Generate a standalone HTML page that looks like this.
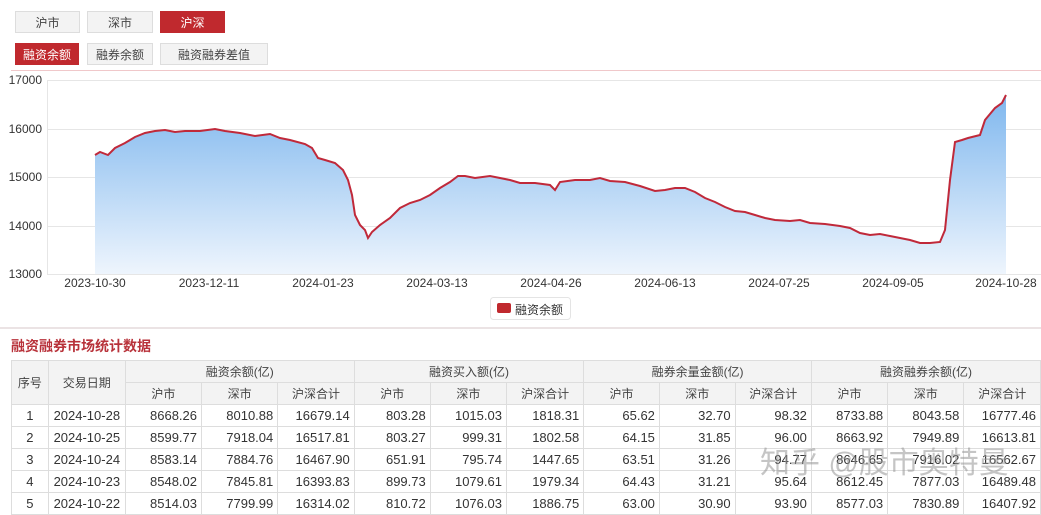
<!DOCTYPE html>
<html><head><meta charset="utf-8"><style>
body{margin:0;width:1041px;height:500px;overflow:hidden;background:#fff;font-family:"Liberation Sans","Noto Sans CJK SC",sans-serif;color:#333;position:relative}
.b{position:absolute;height:22px;line-height:22px;text-align:center;font-size:12px;background:#f3f3f3;border:1px solid #ddd;box-sizing:border-box;color:#444}
.b.on{background:#c0292e;color:#fff;border-color:#c0292e}
.yl{position:absolute;left:0;width:42px;text-align:right;font-size:12px;color:#333}
.xl{position:absolute;top:276px;font-size:12px;color:#333;width:80px;margin-left:-40px;text-align:center}
table{position:absolute;left:11px;top:360px;border-collapse:collapse;font-size:13px;table-layout:fixed}
td{border:1px solid #ddd;height:21px;padding:0 4px;text-align:right;white-space:nowrap;overflow:hidden}
tr.h td{background:#f3f3f3;text-align:center;color:#444;font-size:12px}
td.c{text-align:center}
</style></head><body>
<div class="b" style="left:15px;top:11px;width:65px">沪市</div>
<div class="b" style="left:87px;top:11px;width:66px">深市</div>
<div class="b on" style="left:160px;top:11px;width:65px">沪深</div>
<div class="b on" style="left:15px;top:43px;width:64px">融资余额</div>
<div class="b" style="left:87px;top:43px;width:66px">融券余额</div>
<div class="b" style="left:160px;top:43px;width:108px">融资融券差值</div>
<div style="position:absolute;left:11px;top:70px;width:1030px;height:1px;background:#f0c8ca"></div>
<div class="yl" style="top:73px">17000</div>
<div class="yl" style="top:122px">16000</div>
<div class="yl" style="top:170px">15000</div>
<div class="yl" style="top:219px">14000</div>
<div class="yl" style="top:267px">13000</div>
<svg style="position:absolute;left:0;top:0" width="1041" height="330">
<defs><linearGradient id="g" x1="0" y1="0" x2="0" y2="1"><stop offset="0" stop-color="#7fb7ee"/><stop offset="1" stop-color="#eef5fd"/></linearGradient></defs>
<g stroke="#e6e6e6" stroke-width="1"><line x1="47" y1="80.5" x2="1041" y2="80.5"/><line x1="47" y1="129.5" x2="1041" y2="129.5"/><line x1="47" y1="177.5" x2="1041" y2="177.5"/><line x1="47" y1="226.5" x2="1041" y2="226.5"/><line x1="47" y1="274.5" x2="1041" y2="274.5"/><line x1="47.5" y1="80" x2="47.5" y2="274"/></g>
<path d="M95,155 L100,152 L108,155 L115,148 L125,143 L135,137 L145,133 L155,131 L165,130 L175,132 L185,131 L200,131 L215,129 L225,131 L240,133 L255,136 L270,134 L280,138 L290,140 L305,144 L312,148 L318,158 L325,160 L335,163 L343,170 L348,180 L352,195 L355,215 L360,225 L365,230 L368,238 L372,232 L380,225 L390,218 L400,208 L410,203 L420,200 L430,195 L440,188 L450,182 L458,176 L465,176 L475,178 L490,176 L500,178 L510,180 L520,183 L535,183 L550,185 L555,190 L560,182 L575,180 L590,180 L600,178 L610,181 L625,182 L640,186 L655,191 L665,190 L675,188 L685,188 L695,192 L705,198 L715,202 L725,207 L735,211 L745,212 L755,215 L765,218 L775,220 L790,221 L800,220 L810,223 L825,224 L840,226 L850,228 L860,233 L870,235 L880,234 L890,236 L900,238 L910,240 L920,243 L930,243 L940,242 L945,230 L950,180 L955,142 L962,140 L968,138 L980,135 L985,120 L995,108 L1002,103 L1006,95 L1006,274 L95,274Z" fill="url(#g)"/>
<path d="M95,155 L100,152 L108,155 L115,148 L125,143 L135,137 L145,133 L155,131 L165,130 L175,132 L185,131 L200,131 L215,129 L225,131 L240,133 L255,136 L270,134 L280,138 L290,140 L305,144 L312,148 L318,158 L325,160 L335,163 L343,170 L348,180 L352,195 L355,215 L360,225 L365,230 L368,238 L372,232 L380,225 L390,218 L400,208 L410,203 L420,200 L430,195 L440,188 L450,182 L458,176 L465,176 L475,178 L490,176 L500,178 L510,180 L520,183 L535,183 L550,185 L555,190 L560,182 L575,180 L590,180 L600,178 L610,181 L625,182 L640,186 L655,191 L665,190 L675,188 L685,188 L695,192 L705,198 L715,202 L725,207 L735,211 L745,212 L755,215 L765,218 L775,220 L790,221 L800,220 L810,223 L825,224 L840,226 L850,228 L860,233 L870,235 L880,234 L890,236 L900,238 L910,240 L920,243 L930,243 L940,242 L945,230 L950,180 L955,142 L962,140 L968,138 L980,135 L985,120 L995,108 L1002,103 L1006,95" fill="none" stroke="#c0293a" stroke-width="2"/>
<rect x="490.5" y="297.5" width="80" height="22" rx="3" fill="#fff" stroke="#e4e4e4"/>
<rect x="497" y="303" width="14" height="10" rx="2" fill="#c0292e"/>
</svg>
<div style="position:absolute;left:515px;top:301px;font-size:12px;color:#333">融资余额</div>
<div class="xl" style="left:95px">2023-10-30</div>
<div class="xl" style="left:209px">2023-12-11</div>
<div class="xl" style="left:323px">2024-01-23</div>
<div class="xl" style="left:437px">2024-03-13</div>
<div class="xl" style="left:551px">2024-04-26</div>
<div class="xl" style="left:665px">2024-06-13</div>
<div class="xl" style="left:779px">2024-07-25</div>
<div class="xl" style="left:893px">2024-09-05</div>
<div class="xl" style="left:1006px">2024-10-28</div>
<div style="position:absolute;left:0;top:327px;width:1041px;height:2px;background:#ebe3e4"></div>
<div style="position:absolute;left:11px;top:336px;font-size:14px;font-weight:bold;color:#b8323a">融资融券市场统计数据</div>
<table>
<colgroup><col style="width:37px"><col style="width:77px"><col style="width:77px"><col style="width:77px"><col style="width:77px"><col style="width:77px"><col style="width:77px"><col style="width:78px"><col style="width:77px"><col style="width:77px"><col style="width:77px"><col style="width:77px"><col style="width:77px"><col style="width:77px"></colgroup>
<tr class="h"><td rowspan="2">序号</td><td rowspan="2">交易日期</td><td colspan="3">融资余额(亿)</td><td colspan="3">融资买入额(亿)</td><td colspan="3">融券余量金额(亿)</td><td colspan="3">融资融券余额(亿)</td></tr>
<tr class="h"><td>沪市</td><td>深市</td><td>沪深合计</td><td>沪市</td><td>深市</td><td>沪深合计</td><td>沪市</td><td>深市</td><td>沪深合计</td><td>沪市</td><td>深市</td><td>沪深合计</td></tr>
<tr><td class="c">1</td><td class="c">2024-10-28</td><td>8668.26</td><td>8010.88</td><td>16679.14</td><td>803.28</td><td>1015.03</td><td>1818.31</td><td>65.62</td><td>32.70</td><td>98.32</td><td>8733.88</td><td>8043.58</td><td>16777.46</td></tr>
<tr><td class="c">2</td><td class="c">2024-10-25</td><td>8599.77</td><td>7918.04</td><td>16517.81</td><td>803.27</td><td>999.31</td><td>1802.58</td><td>64.15</td><td>31.85</td><td>96.00</td><td>8663.92</td><td>7949.89</td><td>16613.81</td></tr>
<tr><td class="c">3</td><td class="c">2024-10-24</td><td>8583.14</td><td>7884.76</td><td>16467.90</td><td>651.91</td><td>795.74</td><td>1447.65</td><td>63.51</td><td>31.26</td><td>94.77</td><td>8646.65</td><td>7916.02</td><td>16562.67</td></tr>
<tr><td class="c">4</td><td class="c">2024-10-23</td><td>8548.02</td><td>7845.81</td><td>16393.83</td><td>899.73</td><td>1079.61</td><td>1979.34</td><td>64.43</td><td>31.21</td><td>95.64</td><td>8612.45</td><td>7877.03</td><td>16489.48</td></tr>
<tr><td class="c">5</td><td class="c">2024-10-22</td><td>8514.03</td><td>7799.99</td><td>16314.02</td><td>810.72</td><td>1076.03</td><td>1886.75</td><td>63.00</td><td>30.90</td><td>93.90</td><td>8577.03</td><td>7830.89</td><td>16407.92</td></tr>
</table>
<div style="position:absolute;left:760px;top:438px;font-size:30px;color:rgba(150,150,150,0.55);white-space:nowrap">知乎 @股市奥特曼</div>
</body></html>
